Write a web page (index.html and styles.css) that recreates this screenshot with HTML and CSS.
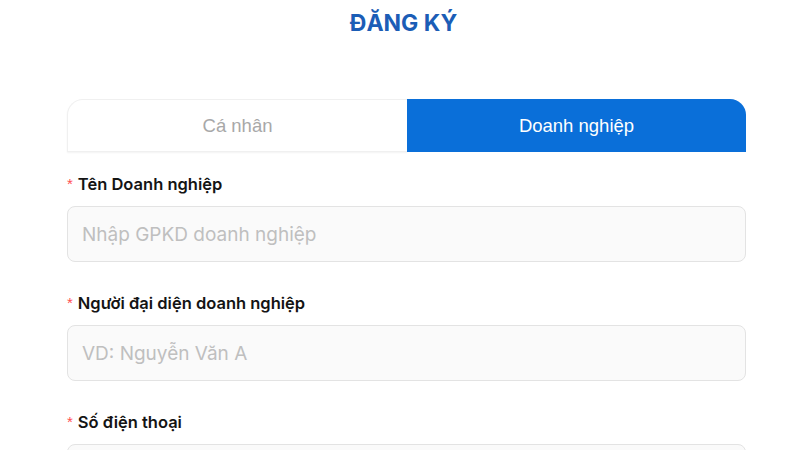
FILE: index.html
```html
<!DOCTYPE html>
<html lang="vi">
<head>
<meta charset="utf-8">
<title>Đăng ký</title>
<link rel="stylesheet" href="styles.css">
</head>
<body>
<div class="page">
  <h1 class="title">ĐĂNG KÝ</h1>
  <div class="tabs">
    <div class="tab">Cá nhân</div>
    <div class="tab active">Doanh nghiệp</div>
  </div>
  <form class="form">
    <div class="field">
      <label class="label"><span class="req">*</span>Tên Doanh nghiệp</label>
      <input class="input" type="text" placeholder="Nhập GPKD doanh nghiệp">
    </div>
    <div class="field">
      <label class="label"><span class="req">*</span>Người đại diện doanh nghiệp</label>
      <input class="input" type="text" placeholder="VD: Nguyễn Văn A">
    </div>
    <div class="field">
      <label class="label"><span class="req">*</span>Số điện thoại</label>
      <input class="input" type="text" placeholder="">
    </div>
  </form>
</div>
</body>
</html>
```

FILE: styles.css
```css
html, body {
  margin: 0;
  padding: 0;
  background: #ffffff;
}
body {
  font-family: Inter, "Noto Sans", sans-serif;
  color: #1c1c1c;
  height: 450px;
  overflow: hidden;
}
.page {
  width: 679px;
  margin-left: 67px;
  padding-top: 8px;
}
.title {
  margin: 0 6px 0 0;
  text-align: center;
  font-size: 23px;
  line-height: 30px;
  font-weight: 700;
  color: #1b5db6;
}
.tabs {
  display: flex;
  margin-top: 61px;
  height: 53px;
}
.tab {
  flex: 1;
  display: flex;
  align-items: center;
  justify-content: center;
  font-family: "Liberation Sans", Arial, sans-serif;
  font-size: 18.5px;
  color: #a8a8a8;
  background: #ffffff;
  border-top-left-radius: 16px;
  border: 1px solid #f0f0f0;
  border-right: none;
  box-shadow: 0 1px 2px rgba(0, 0, 0, 0.05);
}
.tab.active {
  background: #0a6fd9;
  color: #ffffff;
  border: none;
  border-radius: 0 16px 0 0;
  box-shadow: none;
}
.form {
  margin-top: 20px;
}
.field {
  margin-bottom: 29px;
}
.label {
  display: block;
  font-size: 16.5px;
  line-height: 24px;
  font-weight: 600;
  color: #141414;
  margin-bottom: 10px;
}
.req {
  color: #ff4d4f;
  font-family: "Liberation Sans", Arial, sans-serif;
  font-size: 15px;
  font-weight: 400;
  margin-right: 5px;
  vertical-align: 1px;
}
.input {
  display: block;
  box-sizing: border-box;
  width: 100%;
  height: 56px;
  padding: 0 14px;
  border: 1px solid #e3e3e3;
  border-radius: 8px;
  background: #fafafa;
  font-family: Inter, "Noto Sans", sans-serif;
  font-size: 19px;
  color: #1c1c1c;
  outline: none;
}
.input::placeholder {
  color: #bfbfbf;
}
```
